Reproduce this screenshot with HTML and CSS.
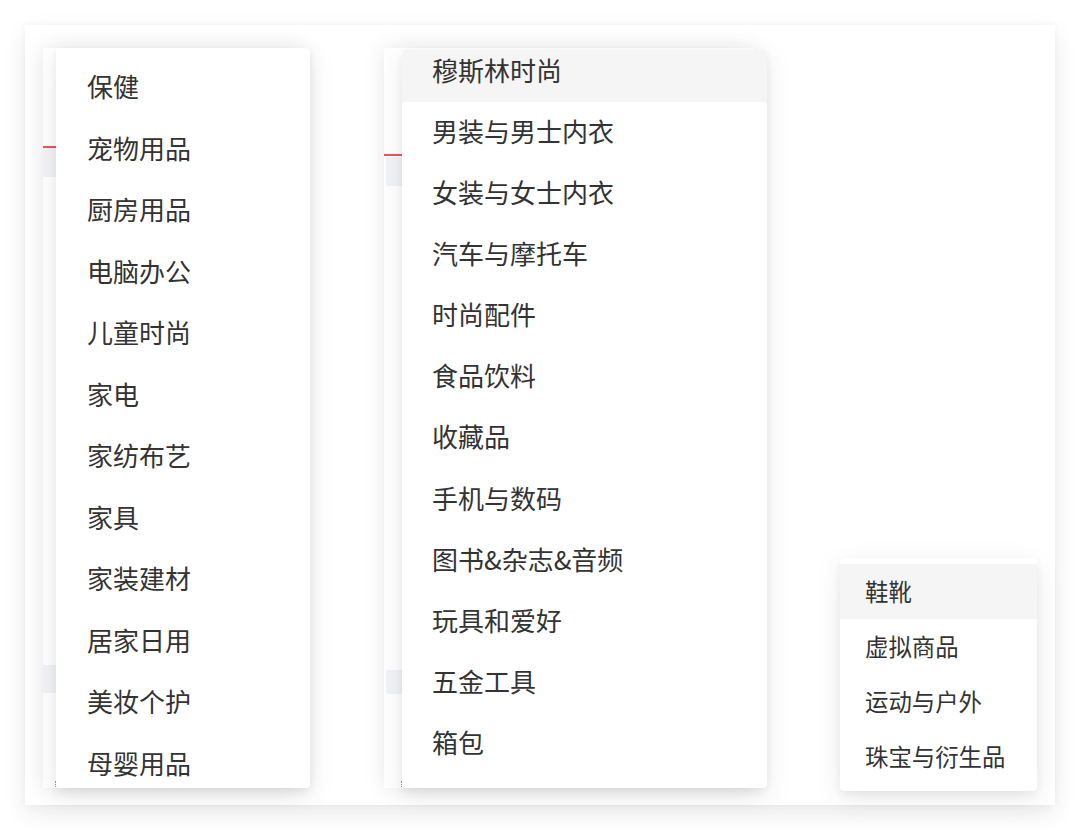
FILE: index.html
```html
<!DOCTYPE html>
<html lang="zh-CN">
<head>
<meta charset="utf-8">
<title>Category dropdowns</title>
<link rel="stylesheet" href="styles.css">
</head>
<body>
<div class="card">
  <div class="panels">
    <div class="panel panel-a">
      <div class="red-line"></div>
      <div class="band band-top"></div>
      <div class="band band-bottom"></div>
      <div class="grip"></div>
    </div>
    <div class="panel panel-b">
      <div class="red-line"></div>
      <div class="band band-top"></div>
      <div class="band band-bottom"></div>
      <div class="grip"></div>
    </div>
  </div>

  <div class="menu menu-a">
    <ul class="menu-list">
      <li class="menu-item">保健</li>
      <li class="menu-item">宠物用品</li>
      <li class="menu-item">厨房用品</li>
      <li class="menu-item">电脑办公</li>
      <li class="menu-item">儿童时尚</li>
      <li class="menu-item">家电</li>
      <li class="menu-item">家纺布艺</li>
      <li class="menu-item">家具</li>
      <li class="menu-item">家装建材</li>
      <li class="menu-item">居家日用</li>
      <li class="menu-item">美妆个护</li>
      <li class="menu-item">母婴用品</li>
    </ul>
  </div>

  <div class="menu menu-b">
    <ul class="menu-list scrolled">
      <li class="menu-item active">穆斯林时尚</li>
      <li class="menu-item">男装与男士内衣</li>
      <li class="menu-item">女装与女士内衣</li>
      <li class="menu-item">汽车与摩托车</li>
      <li class="menu-item">时尚配件</li>
      <li class="menu-item">食品饮料</li>
      <li class="menu-item">收藏品</li>
      <li class="menu-item">手机与数码</li>
      <li class="menu-item">图书&amp;杂志&amp;音频</li>
      <li class="menu-item">玩具和爱好</li>
      <li class="menu-item">五金工具</li>
      <li class="menu-item">箱包</li>
    </ul>
  </div>

  <div class="menu menu-c">
    <ul class="menu-list small">
      <li class="menu-item active">鞋靴</li>
      <li class="menu-item">虚拟商品</li>
      <li class="menu-item">运动与户外</li>
      <li class="menu-item">珠宝与衍生品</li>
    </ul>
  </div>
</div>
</body>
</html>
```

FILE: styles.css
```css
* {
  box-sizing: border-box;
}

html, body {
  margin: 0;
  padding: 0;
  background: #ffffff;
}

body {
  padding: 25px;
  font-family: "Noto Sans CJK SC", "Noto Sans", sans-serif;
  color: #333333;
}

.card {
  position: relative;
  width: 1030px;
  height: 780px;
  background: #ffffff;
  box-shadow: 0 8px 22px rgba(0, 0, 0, 0.09), 0 0 6px rgba(0, 0, 0, 0.03);
  padding: 23px 0 0 18px;
}

.panels {
  display: flex;
  gap: 81px;
}

.panel {
  position: relative;
  height: 740px;
  background: #ffffff;
  box-shadow: 0 0 22px rgba(0, 0, 0, 0.09);
}

.panel-a {
  width: 260px;
}

.panel-b {
  width: 370px;
}

.red-line {
  height: 2px;
  background: #f4525a;
}

.panel-a .red-line {
  margin-top: 98px;
}

.panel-b .red-line {
  margin-top: 106px;
}

.band {
  background: #f2f3f7;
}

.panel-a .band-top {
  height: 29px;
}

.panel-b .band-top {
  height: 29px;
  margin-left: 2px;
  margin-top: 1px;
}

.panel-a .band-bottom {
  height: 28px;
  margin-top: 488px;
}

.panel-b .band-bottom {
  height: 24px;
  margin-left: 2px;
  margin-top: 484px;
}

.grip {
  position: absolute;
  bottom: 1px;
  width: 2px;
  height: 6px;
  border-left: 1px dotted #9a9a9a;
}

.panel-a .grip {
  left: 12px;
}

.panel-b .grip {
  left: 17px;
}

.menu {
  position: absolute;
  background: #ffffff;
  border-radius: 4px;
  overflow: hidden;
  box-shadow: 0 4px 10px rgba(0, 0, 0, 0.06), 0 8px 30px rgba(0, 0, 0, 0.08);
}

.menu-a {
  left: 31px;
  top: 23px;
  width: 254px;
  height: 740px;
}

.menu-b {
  left: 377px;
  top: 25px;
  width: 365px;
  height: 738px;
}

.menu-c {
  left: 815px;
  top: 533px;
  width: 197px;
  height: 233px;
}

.menu-list {
  list-style: none;
  margin: 0;
  padding: 9px 0;
}

.menu-list.scrolled {
  margin-top: -18.1px;
}

.menu-item {
  height: 61.5px;
  line-height: 58.5px;
  padding-bottom: 3px;
  padding-left: 31px;
  font-size: 26px;
  white-space: nowrap;
}

.menu-b .menu-item {
  height: 61.1px;
  line-height: 58.1px;
  padding-left: 30px;
}

.menu-item.active {
  background: #f5f5f5;
}

.menu-list.small {
  padding: 6px 0 7px;
}

.menu-list.small .menu-item {
  height: 55px;
  line-height: 55px;
  padding-bottom: 0;
  padding-left: 25px;
  font-size: 23.4px;
}
```
